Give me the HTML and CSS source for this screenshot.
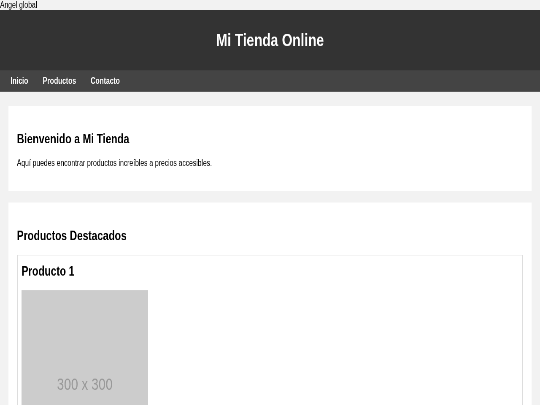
FILE: index.html
```html
<!DOCTYPE html>
<html lang="es">
<head>
<meta charset="utf-8">
<title>Mi Tienda Online</title>
<link rel="stylesheet" href="styles.css">
</head>
<body>
<div class="page">
  <div class="topline">Angel global</div>
  <header class="site-header">
    <h1 class="site-title">Mi Tienda Online</h1>
  </header>
  <nav class="site-nav">
    <a href="#" class="nav-link">Inicio</a>
    <a href="#" class="nav-link">Productos</a>
    <a href="#" class="nav-link">Contacto</a>
  </nav>
  <main class="main">
    <section class="card">
      <h2 class="card-title">Bienvenido a Mi Tienda</h2>
      <p class="card-text">Aquí puedes encontrar productos increíbles a precios accesibles.</p>
    </section>
    <section class="card">
      <h2 class="card-title">Productos Destacados</h2>
      <div class="product">
        <h3 class="product-title">Producto 1</h3>
        <div class="placeholder"><span class="placeholder-text">300 x 300</span></div>
      </div>
    </section>
  </main>
</div>
</body>
</html>
```

FILE: styles.css
```css
html, body {
  margin: 0;
  padding: 0;
  overflow: hidden;
  background: #f2f2f2;
}

.page {
  width: 1280px;
  height: 720px;
  font-family: "Liberation Sans", Arial, sans-serif;
  font-size: 16px;
  color: #000;
  transform: scale(0.421875, 0.5625);
  transform-origin: 0 0;
  will-change: transform;
  overflow: hidden;
}

.topline {
  line-height: normal;
}

.site-header {
  background: #333;
  padding: 14px 0;
  text-align: center;
}

.site-title {
  margin: 21px 0;
  font-size: 32px;
  font-weight: bold;
  color: #fff;
}

.site-nav {
  background: #444;
  padding: 10px;
}

.nav-link {
  color: #fff;
  font-weight: bold;
  text-decoration: none;
  padding: 0 15px;
}

.main {
  padding: 25px 20px 0;
  display: flex;
  flex-direction: column;
  gap: 20px;
}

.card {
  background: #fff;
  padding: 25px 20px;
}

.card-title {
  font-size: 24px;
  font-weight: bold;
  margin: 20px 0;
}

.card-text {
  margin: 16px 0;
}

.product {
  border-style: solid;
  border-color: #ddd;
  border-width: 1.8px 2.4px;
  padding: 14px 9px;
}

.product-title {
  font-size: 24px;
  font-weight: bold;
  margin: 0 0 20px;
}

.placeholder {
  width: 300px;
  height: 300px;
  background: #ccc;
  display: flex;
  align-items: center;
  justify-content: center;
  padding-top: 34px;
  box-sizing: border-box;
}

.placeholder-text {
  font-size: 30px;
  color: #999;
}
```
